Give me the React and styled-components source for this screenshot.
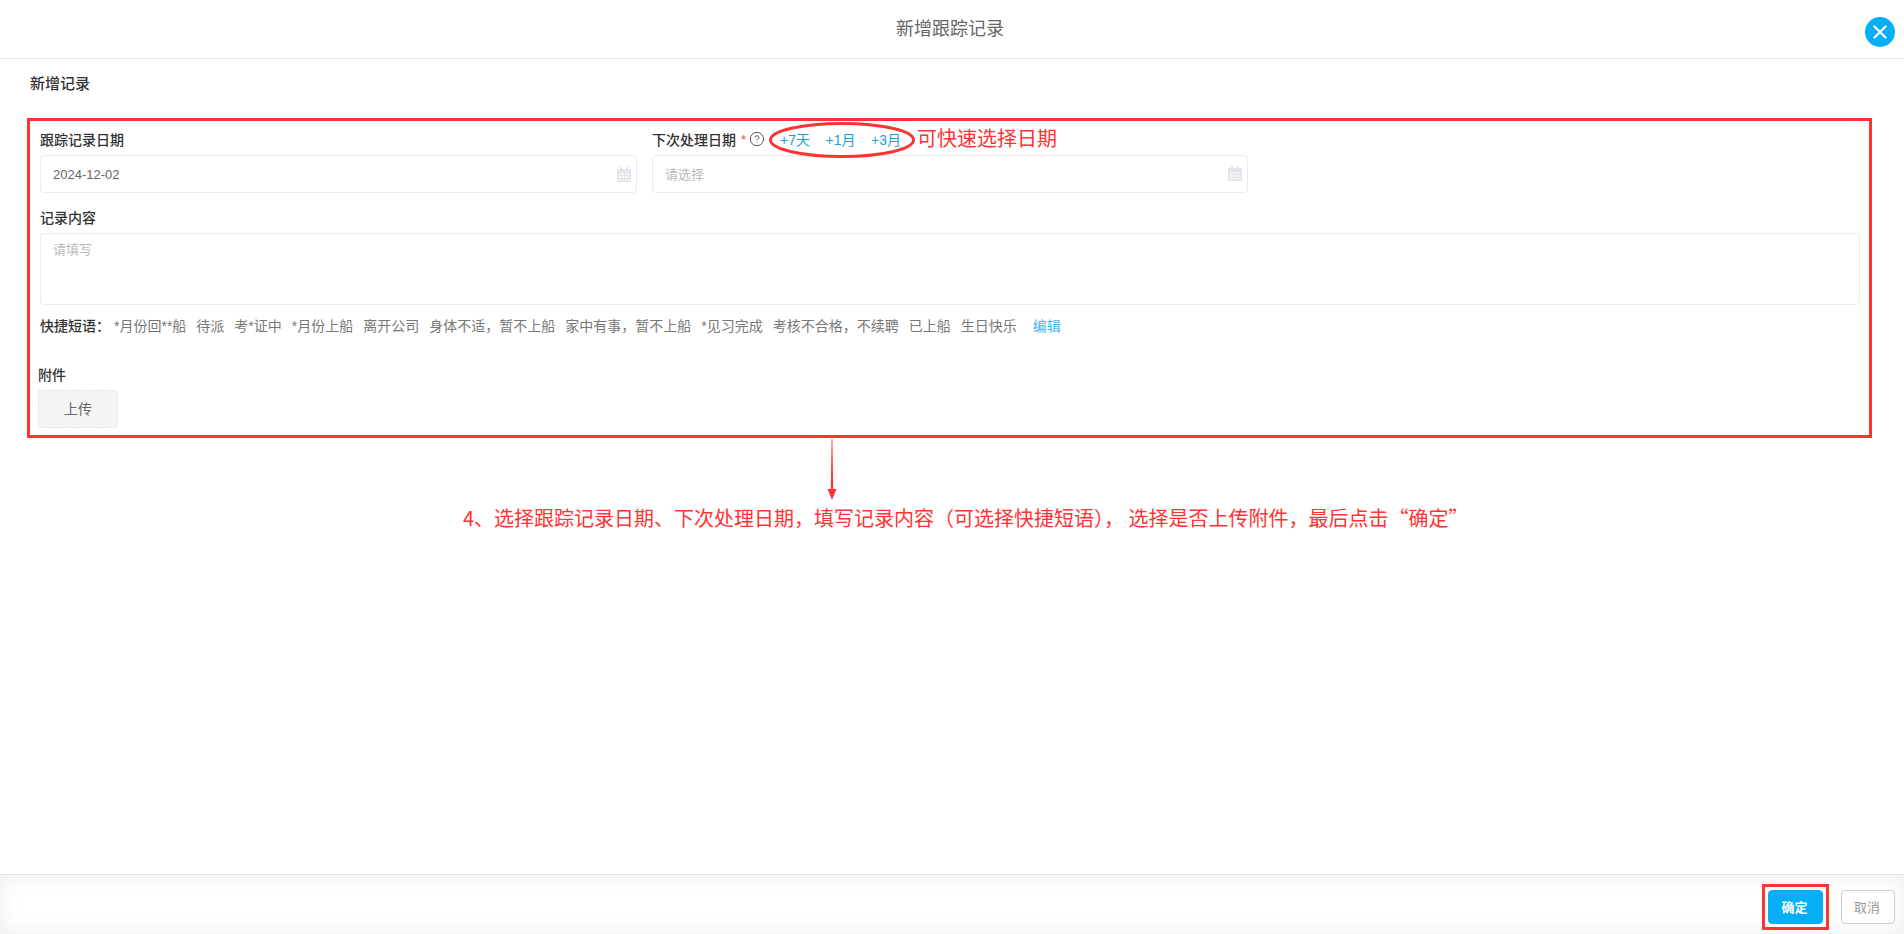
import React from "react";
import styled, { createGlobalStyle } from "styled-components";
import { CircleHelp, X } from "lucide-react";

const GlobalStyle = createGlobalStyle`
  html, body {
    margin: 0;
    height: 100%;
    overflow: hidden;
    background: #fff;
  }
  body {
    font-family: "Liberation Sans", "Noto Sans CJK SC", sans-serif;
    font-size: 14px;
    color: #333;
  }
  #root {
    height: 100%;
  }
`;

const Page = styled.div`
  position: relative;
  height: 100%;
  display: flex;
  flex-direction: column;
`;

const Header = styled.header`
  height: 59px;
  flex: none;
  display: flex;
  align-items: center;
  justify-content: center;
  box-sizing: border-box;
  border-bottom: 1px solid #e3e5e8;
  padding: 0 4px 4px 0;
  font-size: 18px;
  color: #666;
`;

const CloseButton = styled.button`
  position: absolute;
  top: 17px;
  right: 9px;
  width: 30px;
  height: 30px;
  padding: 0;
  border: 0;
  border-radius: 50%;
  background: #0aaef5;
  color: #fff;
  display: flex;
  align-items: center;
  justify-content: center;
`;

const Body = styled.main`
  flex: 1;
  padding: 14px 44px 0 30px;
`;

const SectionTitle = styled.h2`
  margin: 0 0 33px;
  font-size: 15px;
  line-height: 22px;
  font-weight: 500;
  color: #333;
`;

const Form = styled.form`
  position: relative;
  padding-left: 10px;
`;

const DateRow = styled.div`
  display: grid;
  grid-template-columns: 597px 596px;
  column-gap: 15px;
`;

const Field = styled.div`
  display: flex;
  flex-direction: column;
`;

const LabelRow = styled.div`
  height: 24px;
  box-sizing: border-box;
  padding-bottom: 2px;
  display: flex;
  align-items: center;
  margin-bottom: 3px;
`;

const Label = styled.label`
  font-size: 14px;
  font-weight: 500;
  color: #333;
`;

const Required = styled.span`
  margin-left: 5px;
  color: #e4572e;
  font-size: 13px;
`;

const Help = styled.span`
  margin-left: 3px;
  display: inline-flex;
  color: #555;
`;

const QuickDates = styled.div`
  display: flex;
  gap: 15.5px;
  margin-left: 15px;
  color: #1a9fd6;
  font-size: 14px;
`;

const InputBox = styled.div`
  height: 38px;
  box-sizing: border-box;
  border: 1px solid #e9ebee;
  border-radius: 4px;
  padding: 0 5px ${({ $empty }) => ($empty ? "2px" : "0")} 12px;
  display: flex;
  align-items: center;
  justify-content: space-between;
  font-size: 13px;
  color: ${({ $empty }) => ($empty ? "#bbb" : "#666")};
`;

const ContentLabel = styled(LabelRow)`
  padding-bottom: 0;
  margin-top: 12px;
  margin-bottom: 4px;
`;

const TextArea = styled.div`
  height: 72px;
  box-sizing: border-box;
  border: 1px solid #e9ebee;
  border-radius: 4px;
  padding: 7px 12px;
  font-size: 13px;
  line-height: 18px;
  color: #bbb;
`;

const Phrases = styled.div`
  display: flex;
  align-items: center;
  height: 24px;
  margin-top: 8px;
`;

const PhraseTitle = styled.span`
  width: 74px;
  font-size: 14px;
  font-weight: 500;
  color: #333;
`;

const PhraseList = styled.div`
  display: flex;
  gap: 10px;
  color: #777;
  font-size: 14px;
`;

const EditLink = styled.a`
  margin-left: 16px;
  color: #45b6f0;
  font-size: 14px;
`;

const Attachment = styled.div`
  margin: 26px 0 0 -2px;
`;

const AttachmentLabel = styled.div`
  height: 24px;
  line-height: 24px;
  font-size: 14px;
  font-weight: 500;
  color: #333;
`;

const UploadButton = styled.button`
  display: block;
  margin-top: 3px;
  width: 80px;
  height: 38px;
  box-sizing: border-box;
  border: 1px dashed #e3e3e3;
  border-radius: 4px;
  background: #f5f5f5;
  color: #666;
  font: inherit;
  font-size: 14px;
  padding: 0 0 2px;
`;

const Footer = styled.footer`
  height: 60px;
  flex: none;
  box-sizing: border-box;
  border-top: 1px solid #e2e2e2;
  background: #fff;
  box-shadow: inset 0 0 22px rgba(0, 0, 0, 0.07);
  padding: 15px 9px 0 0;
  display: flex;
  justify-content: flex-end;
  gap: 18px;
`;

const FooterButton = styled.button`
  width: ${({ $primary }) => ($primary ? "55px" : "54px")};
  height: 34px;
  box-sizing: border-box;
  border-radius: 4px;
  border: 1px solid ${({ $primary }) => ($primary ? "#06aef6" : "#ccc")};
  background: ${({ $primary }) => ($primary ? "#06aef6" : "#fff")};
  color: ${({ $primary }) => ($primary ? "#fff" : "#999")};
  font: inherit;
  font-size: 13px;
  font-weight: ${({ $primary }) => ($primary ? 700 : 400)};
  padding: 0 2px 2px 0;
`;

/* red callouts drawn on top of the form */
const RED = "#ff3333";

const FormFrame = styled.div`
  position: absolute;
  left: 27px;
  top: 118px;
  width: 1845px;
  height: 320px;
  box-sizing: border-box;
  border: 3px solid ${RED};
  pointer-events: none;
`;

const ButtonFrame = styled.div`
  position: absolute;
  left: 1762px;
  top: 884px;
  width: 67px;
  height: 46px;
  box-sizing: border-box;
  border: 3px solid ${RED};
  pointer-events: none;
`;

const DateEllipse = styled.svg`
  position: absolute;
  left: 768px;
  top: 121px;
`;

const DateNote = styled.div`
  position: absolute;
  left: 917px;
  top: 124px;
  font-family: "Noto Sans CJK SC", sans-serif;
  font-size: 20px;
  line-height: 28px;
  color: ${RED};
`;

const ArrowMark = styled.svg`
  position: absolute;
  left: 826px;
  top: 439px;
`;

const StepNote = styled.div`
  position: absolute;
  left: 463px;
  top: 504px;
  font-family: "Noto Sans CJK SC", sans-serif;
  font-size: 20px;
  line-height: 28px;
  white-space: nowrap;
  color: ${RED};
`;

const CalendarIcon = () => (
  <svg width="14" height="15" viewBox="0 0 14 15" fill="#e2e6ea">
    <path d="M3 0h2v2h4V0h2v2h3v13H0V2h3V0z" />
    <path
      d="M2 6h2v2H2zM5 6h2v2H5zM8 6h2v2H8zM11 6h1.500v2H11zM2 9h2v2H2zM5 9h2v2H5zM8 9h2v2H8zM11 9h1.500v2H11zM2 12h2v1.500H2zM5 12h2v1.500H5zM8 12h2v1.500H8zM11 12h1.500v1.500H11z"
      fill="#f6f7f9"
    />
  </svg>
);

const phrases = [
  "*月份回**船",
  "待派",
  "考*证中",
  "*月份上船",
  "离开公司",
  "身体不适，暂不上船",
  "家中有事，暂不上船",
  "*见习完成",
  "考核不合格，不续聘",
  "已上船",
  "生日快乐",
];

export default function App() {
  return (
    <Page>
      <GlobalStyle />
      <Header>新增跟踪记录</Header>
      <CloseButton aria-label="close">
        <X size={22} strokeWidth={2.4} />
      </CloseButton>

      <Body>
        <SectionTitle>新增记录</SectionTitle>
        <Form>
          <DateRow>
            <Field>
              <LabelRow>
                <Label>跟踪记录日期</Label>
              </LabelRow>
              <InputBox>
                2024-12-02
                <CalendarIcon />
              </InputBox>
            </Field>
            <Field>
              <LabelRow>
                <Label>下次处理日期</Label>
                <Required>*</Required>
                <Help>
                  <CircleHelp size={16} strokeWidth={1.5} />
                </Help>
                <QuickDates>
                  <span>+7天</span>
                  <span>+1月</span>
                  <span>+3月</span>
                </QuickDates>
              </LabelRow>
              <InputBox $empty>
                请选择
                <CalendarIcon />
              </InputBox>
            </Field>
          </DateRow>

          <ContentLabel>
            <Label>记录内容</Label>
          </ContentLabel>
          <TextArea>请填写</TextArea>

          <Phrases>
            <PhraseTitle>快捷短语：</PhraseTitle>
            <PhraseList>
              {phrases.map((p) => (
                <span key={p}>{p}</span>
              ))}
            </PhraseList>
            <EditLink>编辑</EditLink>
          </Phrases>

          <Attachment>
            <AttachmentLabel>附件</AttachmentLabel>
            <UploadButton type="button">上传</UploadButton>
          </Attachment>
        </Form>
      </Body>

      <Footer>
        <FooterButton $primary>确定</FooterButton>
        <FooterButton>取消</FooterButton>
      </Footer>

      <FormFrame />
      <ButtonFrame />
      <DateEllipse width="148" height="38" viewBox="0 0 148 38">
        <ellipse cx="74" cy="19" rx="71.500" ry="16.500" fill="none" stroke={RED} strokeWidth="3" />
      </DateEllipse>
      <DateNote>可快速选择日期</DateNote>
      <ArrowMark width="12" height="61" viewBox="0 0 12 61">
        <path d="M5.600 0 L6.400 0 L7.200 50 L10.500 50 L6 61 L1.500 50 L4.800 50 Z" fill={RED} />
      </ArrowMark>
      <StepNote>4、选择跟踪记录日期、下次处理日期，填写记录内容（可选择快捷短语）， 选择是否上传附件，最后点击“确定”</StepNote>
    </Page>
  );
}
